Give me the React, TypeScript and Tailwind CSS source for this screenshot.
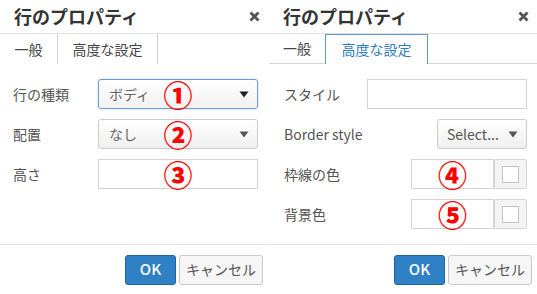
import React from 'react';

const jp = { fontFamily: '"Noto Sans CJK JP", "Noto Sans", sans-serif' };

const Num = ({ n }: { n: string }) => (
    <span className="absolute left-1/2 top-1/2 -translate-x-1/2 -translate-y-1/2 text-[29px] font-black leading-none text-[#ff0000]">
        {n}
    </span>
);

const Arrow = ({ dark }: { dark?: boolean }) => (
    <svg width="10" height="7" viewBox="0 0 10 7" className={dark ? 'fill-[#222]' : 'fill-[#555]'}>
        <path d="M0.5 0.5 L9.5 0.5 L5 6.5 Z" />
    </svg>
);

const Header = () => (
    <div className="flex h-[34px] items-center justify-between border-b border-[#e2e2e2] pl-[14px] pr-[8px]">
        <span className="text-[18px] font-bold text-[#333]">行のプロパティ</span>
        <svg width="11" height="11" viewBox="0 0 11 11" className="stroke-[#555]">
            <path d="M1.5 1.5 L9.5 9.5 M9.5 1.5 L1.5 9.5" strokeWidth="2.8" />
        </svg>
    </div>
);

const Footer = () => (
    <div className="mt-auto flex h-[50px] items-center justify-end gap-[3px] border-t border-[#e2e2e2] pr-[5px]">
        <button className="h-[30px] w-[51px] rounded-[3px] border border-[#1f64a0] bg-[#2f80c4] text-[15px] font-medium text-white">
            OK
        </button>
        <button className="h-[30px] w-[84px] rounded-[3px] border border-[#c9c9c9] bg-[#f6f6f6] text-[14px] text-[#555]">
            キャンセル
        </button>
    </div>
);

const ColorField = ({ n }: { n: string }) => (
    <div className="flex h-[30px]">
        <div className="relative h-[30px] w-[83px] border border-[#d4d4d4] bg-white">
            <Num n={n} />
        </div>
        <div className="flex h-[30px] w-[33px] items-center justify-center rounded-[2px] border border-[#d4d4d4] bg-[#f4f4f4]">
            <div className="h-[17px] w-[17px] border border-[#c4c4c4] bg-white" />
        </div>
    </div>
);

const Row = ({ label, children }: { label: string; children: React.ReactNode }) => (
    <div className="flex h-[30px] items-center justify-between">
        <span className="text-[14px] text-[#555]">{label}</span>
        {children}
    </div>
);

export default function App() {
    return (
        <div className="flex h-[294px] w-[537px] bg-white" style={jp}>
            {/* 一般 */}
            <div className="flex h-full w-[268px] flex-col">
                <Header />
                <div className="flex h-[30px] text-[14px] text-[#444]">
                    <div className="flex w-[57px] items-center justify-center">一般</div>
                    <div className="flex w-[101px] items-center justify-center border-x border-[#cfcfcf]">高度な設定</div>
                </div>
                <div className="flex flex-col gap-[10px] pl-[13px] pr-[10px] pt-[15px]">
                    <Row label="行の種類">
                        <div className="relative flex h-[30px] w-[160px] items-center justify-between rounded-[3px] border border-[#6d9fd6] bg-gradient-to-b from-white to-[#f1f1f1] pl-[10px] pr-[8px] shadow-[0_0_2px_rgba(80,140,210,0.5)]">
                            <span className="text-[14px] text-[#666]">ボディ</span>
                            <Arrow dark />
                            <Num n="①" />
                        </div>
                    </Row>
                    <Row label="配置">
                        <div className="relative flex h-[30px] w-[160px] items-center justify-between rounded-[3px] border border-[#cccccc] bg-gradient-to-b from-white to-[#efefef] pl-[10px] pr-[8px]">
                            <span className="text-[14px] text-[#666]">なし</span>
                            <Arrow />
                            <Num n="②" />
                        </div>
                    </Row>
                    <Row label="高さ">
                        <div className="relative h-[30px] w-[160px] border border-[#d4d4d4] bg-white">
                            <Num n="③" />
                        </div>
                    </Row>
                </div>
                <Footer />
            </div>

            {/* 高度な設定 */}
            <div className="ml-[1px] flex h-full w-[268px] flex-col">
                <Header />
                <div className="flex h-[30px] border-b border-[#d4d4d4] text-[14px]">
                    <div className="flex w-[56px] items-center justify-center text-[#444]">一般</div>
                    <div className="mb-[-1px] flex w-[103px] items-center justify-center border-x border-t border-[#5b9bd5] bg-white text-[#2f7bc0]">
                        高度な設定
                    </div>
                </div>
                <div className="flex flex-col gap-[10px] pl-[15px] pr-[10px] pt-[15px]">
                    <Row label="スタイル">
                        <div className="h-[30px] w-[160px] border border-[#d4d4d4] bg-white" />
                    </Row>
                    <Row label="Border style">
                        <div className="flex h-[30px] w-[90px] items-center justify-between rounded-[3px] border border-[#cccccc] bg-gradient-to-b from-white to-[#efefef] pl-[9px] pr-[8px]">
                            <span className="text-[14px] text-[#555]">Select...</span>
                            <Arrow />
                        </div>
                    </Row>
                    <Row label="枠線の色">
                        <ColorField n="④" />
                    </Row>
                    <Row label="背景色">
                        <ColorField n="⑤" />
                    </Row>
                </div>
                <Footer />
            </div>
        </div>
    );
}
